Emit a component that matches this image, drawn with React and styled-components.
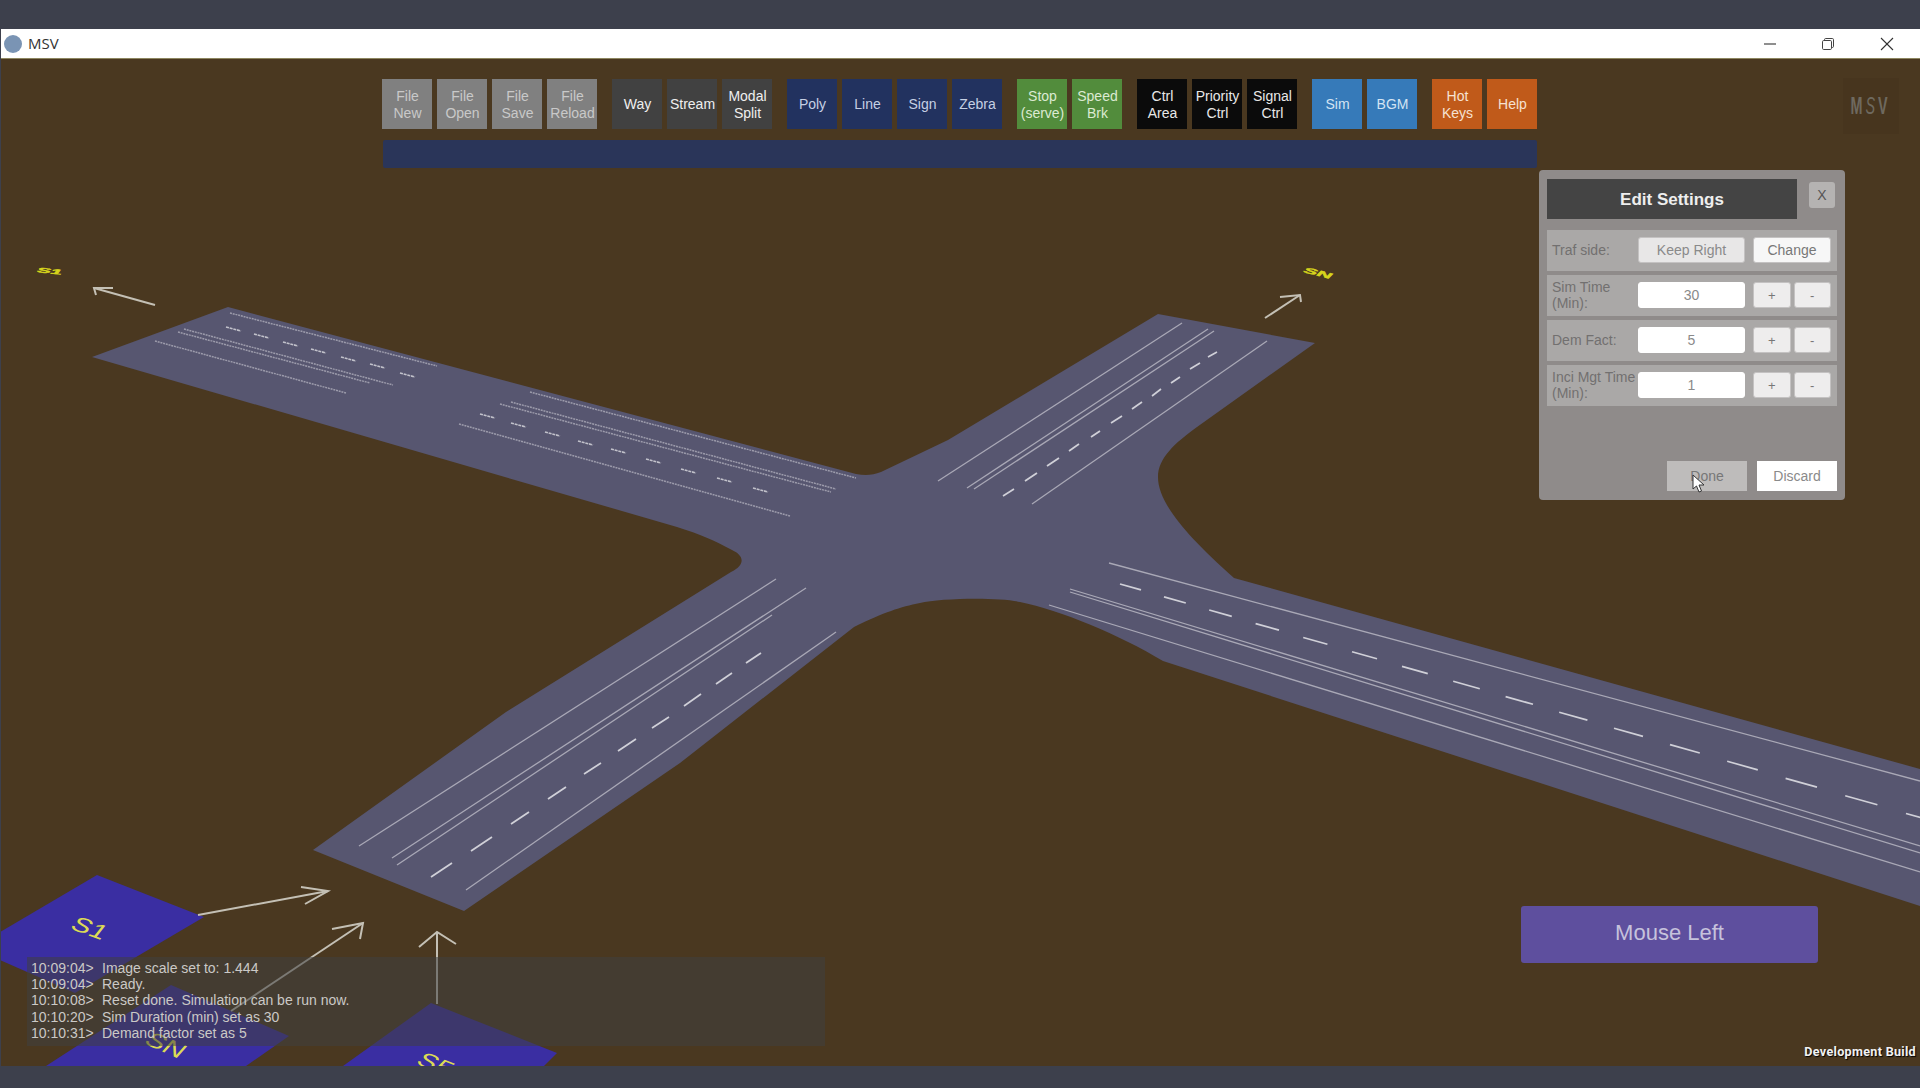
import React from "react";
import styled, { createGlobalStyle } from "styled-components";

const GlobalStyle = createGlobalStyle`
  html, body { margin: 0; padding: 0; background: #3d404c; }
  body { font-family: "Liberation Sans", Arial, sans-serif; }
`;

// Toolbar colours
const tones = {
  file: { bg: "#808080", fg: "#c9c9c9" },
  way: { bg: "#414141", fg: "#efefef" },
  draw: { bg: "#22325f", fg: "#c6d0e4" },
  stop: { bg: "#528c3c", fg: "#dcead2" },
  ctrl: { bg: "#0b0b0b", fg: "#e8e8e8" },
  sim: { bg: "#367ab9", fg: "#d3e4f3" },
  help: { bg: "#c05a1a", fg: "#f6e2d2" },
};

const toolGroups = [
  [["File", "New", "file"], ["File", "Open", "file"], ["File", "Save", "file"], ["File", "Reload", "file"]],
  [["Way", null, "way"], ["Stream", null, "way"], ["Modal", "Split", "way"]],
  [["Poly", null, "draw"], ["Line", null, "draw"], ["Sign", null, "draw"], ["Zebra", null, "draw"]],
  [["Stop", "(serve)", "stop"], ["Speed", "Brk", "stop"]],
  [["Ctrl", "Area", "ctrl"], ["Priority", "Ctrl", "ctrl"], ["Signal", "Ctrl", "ctrl"]],
  [["Sim", null, "sim"], ["BGM", null, "sim"]],
  [["Hot", "Keys", "help"], ["Help", null, "help"]],
];

const logLines = [
  ["10:09:04>", "Image scale set to: 1.444"],
  ["10:09:04>", "Ready."],
  ["10:10:08>", "Reset done. Simulation can be run now."],
  ["10:10:20>", "Sim Duration (min) set as 30"],
  ["10:10:31>", "Demand factor set as 5"],
];

// Road markings, in page pixels
const farLines = [
  [230, 313, 437, 366], [530, 392, 856, 478],
  [184, 329, 393, 385], [178, 332, 370, 383],
  [511, 402, 836, 489], [500, 404, 831, 492],
  [155, 341, 346, 393], [459, 424, 790, 516],
];

const solidLines = [
  [359, 846, 776, 579], [392, 858, 806, 588], [397, 865, 772, 615], [466, 890, 836, 632],
  [938, 481, 1182, 323], [967, 488, 1208, 329], [974, 489, 1214, 331], [1032, 504, 1267, 341],
  [1109, 563, 1920, 781], [1070, 589, 1920, 846], [1070, 592, 1920, 853], [1049, 605, 1920, 872],
];

const dashes = [
  [431, 877, 452, 863], [471, 851, 492, 837], [511, 824, 529, 812], [548, 799, 566, 787],
  [584, 774, 601, 763], [618, 751, 636, 739], [652, 728, 669, 717], [684, 706, 701, 694],
  [716, 684, 732, 673], [746, 663, 761, 653],
  [1003, 496, 1014, 489], [1025, 481, 1037, 473], [1047, 466, 1059, 458], [1069, 451, 1079, 444],
  [1091, 437, 1100, 431], [1111, 423, 1122, 416], [1132, 409, 1142, 402], [1152, 396, 1161, 389],
  [1171, 383, 1180, 377], [1190, 369, 1200, 363], [1208, 357, 1217, 352],
];

// west arm dashes, two runs
const westDashes = [
  [226, 327], [254, 334], [283, 342], [311, 349], [341, 357], [370, 364], [400, 373],
  [480, 414], [511, 423], [545, 432], [578, 441], [611, 449], [646, 459], [681, 469], [717, 478], [753, 488],
];

// east arm dashes get longer towards the camera
const eastDashes = [];
for (let i = 0, x = 1120; x < 1920; i++) {
  const y = 584 + (x - 1120) * 0.292;
  const len = 21 + i * 0.8;
  eastDashes.push([x, y, x + len, y + len * 0.28]);
  x += 44 + i * 1.2;
}

const ROAD = `M228 307 L856 474 C866 476 873 475 881 472 L948 440 L1158 314 L1315 343 L1197 427
  C1175 443 1158 458 1158 477 C1158 500 1180 530 1234 578 L1920 769 L1920 906 L1163 661
  C1120 635 1060 610 1020 602 C1000 597 940 598 920 603 C900 607 885 612 854 627 L680 763 L464 911
  L313 850 L506 712 L731 572 C745 565 745 556 732 550 C715 541 700 534 677 527 L92 357 Z`;

const Page = styled.div`
  display: flex;
  flex-direction: column;
  width: 1920px;
  height: 1088px;
  overflow: hidden;
  background: #3d404c;
`;

const Strip = styled.div`
  flex: none;
  height: ${(p) => p.$h}px;
  background: #3d404c;
`;

const TitleBar = styled.div`
  flex: none;
  display: flex;
  align-items: center;
  height: 29px;
  margin-left: 1px;
  padding: 0 4px 0 3px;
  background: #fff;
  border-bottom: 1px solid #8d8660;
`;

const AppIcon = styled.span`
  width: 18px;
  height: 18px;
  border-radius: 50%;
  background: #7a94b4;
`;

const AppName = styled.span`
  margin-left: 6px;
  padding-bottom: 2px;
  font: 15px "Open Sans", sans-serif;
  color: #333;
  flex: 1;
`;

const WinBtn = styled.span`
  display: flex;
  align-items: center;
  justify-content: center;
  width: 58.5px;
  height: 100%;
`;

const Scene = styled.div`
  position: relative;
  flex: 1;
  margin-left: 1px;
  background: #4a3820;
  overflow: hidden;
`;

const World = styled.svg`
  position: absolute;
  left: -1px;
  top: 0;
`;

const ToolArea = styled.div`
  position: absolute;
  left: 381px;
  top: 20px;
  display: flex;
  flex-direction: column;
  gap: 11px;
`;

const Toolbar = styled.div`
  display: flex;
  gap: 15px;
`;

const ToolGroup = styled.div`
  display: flex;
  gap: 5px;
`;

const ToolBtn = styled.div`
  display: flex;
  flex-direction: column;
  align-items: center;
  justify-content: center;
  box-sizing: border-box;
  width: 50px;
  height: 50px;
  padding: 1px 0 0 1px;
  font-size: 14px;
  line-height: 17px;
  white-space: nowrap;
  background: ${(p) => tones[p.$tone].bg};
  color: ${(p) => tones[p.$tone].fg};
`;

const ProgressBar = styled.div`
  height: 28px;
  margin-left: 1px;
  border-radius: 2px;
  background: #2a3559;
`;

const Logo = styled.div`
  position: absolute;
  left: 1842px;
  top: 19px;
  width: 56px;
  height: 56px;
  display: flex;
  align-items: center;
  justify-content: center;
  background: rgba(0, 0, 0, 0.04);
`;

const LogoText = styled.span`
  display: inline-block;
  flex: none;
  transform: scaleX(0.6);
  font-size: 24px;
  font-weight: bold;
  letter-spacing: 5px;
  white-space: nowrap;
  color: #6e695f;
`;

const LogoS = styled.span`
  display: inline-block;
  font-style: italic;
  font-weight: normal;
`;

const Panel = styled.div`
  position: absolute;
  right: 75px;
  top: 111px;
  box-sizing: border-box;
  width: 306px;
  height: 330px;
  padding: 9px 8px 9px;
  display: flex;
  flex-direction: column;
  border-radius: 4px;
  background: #8f8b8a;
`;

const PanelHead = styled.div`
  display: flex;
  align-items: flex-start;
  gap: 12px;
`;

const PanelTitle = styled.div`
  width: 250px;
  height: 40px;
  padding-top: 1px;
  box-sizing: border-box;
  display: flex;
  align-items: center;
  justify-content: center;
  background: #444;
  color: #eee;
  font-size: 17px;
  font-weight: bold;
`;

const CloseBtn = styled.div`
  width: 26px;
  height: 26px;
  margin-top: 3px;
  display: flex;
  align-items: center;
  justify-content: center;
  border-radius: 3px;
  background: #b5b3b2;
  color: #555;
  font-size: 14px;
`;

const Rows = styled.div`
  display: flex;
  flex-direction: column;
  gap: 4.5px;
  margin-top: 11px;
`;

const Row = styled.div`
  display: flex;
  align-items: center;
  height: 40.5px;
  padding: 0 6px 0 5px;
  background: #aaa8a7;
`;

const RowLabel = styled.div`
  width: 86px;
  flex: none;
  font-size: 14px;
  line-height: 16px;
  color: #727070;
  white-space: nowrap;
`;

const Field = styled.div`
  width: 107px;
  height: 26px;
  flex: none;
  display: flex;
  align-items: center;
  justify-content: center;
  box-sizing: border-box;
  border-radius: 3px;
  font-size: 14px;
  color: #8a8a8a;
  background: ${(p) => (p.$readonly ? "#e8e7e7" : "#fff")};
  border: 1px solid ${(p) => (p.$readonly ? "#c4c2c2" : "#fff")};
`;

const RowActions = styled.div`
  display: flex;
  gap: 3px;
  margin-left: 8px;
`;

const SmallBtn = styled.div`
  width: ${(p) => p.$w}px;
  height: 26px;
  display: flex;
  align-items: center;
  justify-content: center;
  box-sizing: border-box;
  border-radius: 3px;
  border: 1px solid #c4c2c2;
  background: ${(p) => (p.$plain ? "#f7f7f7" : "#eeeded")};
  color: #777;
  font-size: ${(p) => (p.$plain ? 14 : 13)}px;
`;

const PanelFoot = styled.div`
  display: flex;
  justify-content: flex-end;
  gap: 10px;
  margin-top: auto;
`;

const FootBtn = styled.div`
  position: relative;
  width: 80px;
  height: 30px;
  display: flex;
  align-items: center;
  justify-content: center;
  font-size: 14px;
  color: ${(p) => (p.$pressed ? "#777" : "#8a8a8a")};
  background: ${(p) => (p.$pressed ? "#bebcbb" : "#fff")};
`;

const Cursor = styled.svg`
  position: absolute;
  left: 25px;
  top: 13px;
`;

const MouseBadge = styled.div`
  position: absolute;
  right: 102px;
  bottom: 103px;
  width: 297px;
  height: 57px;
  display: flex;
  align-items: center;
  justify-content: center;
  padding-bottom: 3px;
  box-sizing: border-box;
  border-radius: 3px;
  background: #5e4f9e;
  color: #c6c2dc;
  font-size: 22px;
`;

const LogBox = styled.div`
  position: absolute;
  left: 26px;
  bottom: 20px;
  box-sizing: border-box;
  width: 798px;
  height: 89px;
  padding: 3px 0 0 4px;
  background: rgba(63, 63, 63, 0.55);
`;

const LogLine = styled.div`
  display: flex;
  height: 16.2px;
  font-size: 14px;
  line-height: 16.2px;
  color: #cbc9c6;
  white-space: nowrap;
`;

const LogTime = styled.span`
  width: 71px;
  flex: none;
`;

const DevBuild = styled.div`
  position: absolute;
  right: 4px;
  bottom: 7px;
  font: bold 12.6px Roboto, sans-serif;
  letter-spacing: 0.3px;
  color: #f2f2f2;
  text-shadow: 1px 1px 1px #000;
`;

function Arrow({ points, head }) {
  return (
    <g fill="none" stroke="#c4c0b5" strokeWidth="2">
      <line x1={points[0]} y1={points[1]} x2={points[2]} y2={points[3]} />
      <polyline points={head} />
    </g>
  );
}

function PadLabel({ x, y, rot, children }) {
  return (
    <text
      transform={`translate(${x} ${y}) rotate(${rot}) skewX(-18) scale(1.05 .8)`}
      textAnchor="middle"
      dominantBaseline="central"
      fontFamily="Liberation Sans, sans-serif"
      fontSize="27"
      fill="#dcdb55"
    >
      {children}
    </text>
  );
}

function WorldView() {
  return (
    <World width="1920" height="1007" viewBox="0 59 1920 1007">
      <path d={ROAD} fill="#575670" />
      <g stroke="#9c9bab" strokeWidth="1.5" strokeDasharray="2 .8">
        {farLines.map((l, i) => (
          <line key={i} x1={l[0]} y1={l[1]} x2={l[2]} y2={l[3]} />
        ))}
      </g>
      <g stroke="#a9a8b6" strokeWidth="1.3">
        {solidLines.map((l, i) => (
          <line key={i} x1={l[0]} y1={l[1]} x2={l[2]} y2={l[3]} />
        ))}
      </g>
      <g stroke="#d0d0d8" strokeWidth="1.7">
        {dashes.map((l, i) => (
          <line key={i} x1={l[0]} y1={l[1]} x2={l[2]} y2={l[3]} />
        ))}
        {eastDashes.map((l, i) => (
          <line key={i} x1={l[0]} y1={l[1]} x2={l[2]} y2={l[3]} />
        ))}
      </g>
      <g stroke="#c2c2cb" strokeWidth="1.7" strokeDasharray="3 .8">
        {westDashes.map((d, i) => (
          <line key={i} x1={d[0]} y1={d[1]} x2={d[0] + 15} y2={d[1] + 4} />
        ))}
      </g>

      <polygon points="97,875 204,917 75,993 0,960 0,932" fill="#3a2ea2" />
      <polygon points="171,985 289,1036 246,1066 46,1066" fill="#3a2ea2" />
      <polygon points="431,1003 557,1053 544,1066 343,1066" fill="#3a2ea2" />
      <PadLabel x={90} y={928} rot={20}>S1</PadLabel>
      <PadLabel x={166} y={1045} rot={24}>SN</PadLabel>
      <PadLabel x={436} y={1064} rot={22}>S5</PadLabel>

      <Arrow points={[198, 915, 328, 891]} head="301,887 328,891 305,904" />
      <Arrow points={[231, 1011, 363, 923]} head="332,929 363,923 360,939" />
      <Arrow points={[437, 1004, 437, 932]} head="419,947 437,932 456,944" />
      <Arrow points={[155, 305, 94, 288]} head="113,288 94,288 96,295" />
      <Arrow points={[1265, 318, 1300, 295]} head="1280,297 1300,295 1301,302" />

      <text
        transform="translate(50 271) rotate(6) skewX(-30) scale(2 .7)"
        textAnchor="middle"
        dominantBaseline="central"
        fontFamily="Liberation Sans, sans-serif"
        fontWeight="bold"
        fontSize="10"
        stroke="#d6d41c"
        strokeWidth=".6"
        fill="#d6d41c"
      >
        S1
      </text>
      <text
        transform="translate(1318 273) rotate(14) skewX(-30) scale(1.7 .7)"
        textAnchor="middle"
        dominantBaseline="central"
        fontFamily="Liberation Sans, sans-serif"
        fontWeight="bold"
        fontSize="12"
        stroke="#d6d41c"
        strokeWidth=".5"
        fill="#d6d41c"
      >
        SN
      </text>
    </World>
  );
}

function SettingsRow({ label, value, readonly }) {
  return (
    <Row>
      <RowLabel>{label}</RowLabel>
      <Field $readonly={readonly}>{value}</Field>
      <RowActions>
        {readonly ? (
          <SmallBtn $w={78} $plain>Change</SmallBtn>
        ) : (
          <>
            <SmallBtn $w={37.5}>+</SmallBtn>
            <SmallBtn $w={37.5}>-</SmallBtn>
          </>
        )}
      </RowActions>
    </Row>
  );
}

export default function App() {
  return (
    <Page>
      <GlobalStyle />
      <Strip $h={29} />
      <TitleBar>
        <AppIcon />
        <AppName>MSV</AppName>
        <WinBtn>
          <svg width="14" height="14" viewBox="0 0 14 14">
            <line x1="1" y1="7" x2="13" y2="7" stroke="#444" strokeWidth="1.2" />
          </svg>
        </WinBtn>
        <WinBtn>
          <svg width="14" height="14" viewBox="0 0 14 14" fill="none" stroke="#444" strokeWidth="1">
            <rect x="1.5" y="3.5" width="9" height="9" rx="1.2" />
            <path d="M3.5 3.5V2.7a1.2 1.2 0 0 1 1.2-1.2h6.6a1.2 1.2 0 0 1 1.2 1.2v6.6a1.2 1.2 0 0 1-1.2 1.2h-.8" />
          </svg>
        </WinBtn>
        <WinBtn>
          <svg width="14" height="14" viewBox="0 0 14 14" stroke="#333" strokeWidth="1.1">
            <line x1="1" y1="1" x2="13" y2="13" />
            <line x1="13" y1="1" x2="1" y2="13" />
          </svg>
        </WinBtn>
      </TitleBar>
      <Scene>
        <WorldView />

        <ToolArea>
          <Toolbar>
            {toolGroups.map((group, i) => (
              <ToolGroup key={i}>
                {group.map(([a, b, tone]) => (
                  <ToolBtn key={a + b} $tone={tone}>
                    <span>{a}</span>
                    {b && <span>{b}</span>}
                  </ToolBtn>
                ))}
              </ToolGroup>
            ))}
          </Toolbar>
          <ProgressBar />
        </ToolArea>

        <Logo>
          <LogoText>M<LogoS>S</LogoS>V</LogoText>
        </Logo>

        <Panel>
          <PanelHead>
            <PanelTitle>Edit Settings</PanelTitle>
            <CloseBtn>X</CloseBtn>
          </PanelHead>
          <Rows>
            <SettingsRow label="Traf side:" value="Keep Right" readonly />
            <SettingsRow label={<>Sim Time<br />(Min):</>} value="30" />
            <SettingsRow label="Dem Fact:" value="5" />
            <SettingsRow label={<>Inci Mgt Time<br />(Min):</>} value="1" />
          </Rows>
          <PanelFoot>
            <FootBtn $pressed>
              Done
              <Cursor width="14" height="20" viewBox="0 0 14 20">
                <path d="M1 1 L1 15 L4.5 12 L7 18 L9.5 17 L7 11 L12 11 Z" fill="#fff" stroke="#333" strokeWidth="1" />
              </Cursor>
            </FootBtn>
            <FootBtn>Discard</FootBtn>
          </PanelFoot>
        </Panel>

        <MouseBadge>Mouse Left</MouseBadge>

        <LogBox>
          {logLines.map(([time, msg], i) => (
            <LogLine key={i}>
              <LogTime>{time}</LogTime>
              <span>{msg}</span>
            </LogLine>
          ))}
        </LogBox>

        <DevBuild>Development Build</DevBuild>
      </Scene>
      <Strip $h={22} />
    </Page>
  );
}
